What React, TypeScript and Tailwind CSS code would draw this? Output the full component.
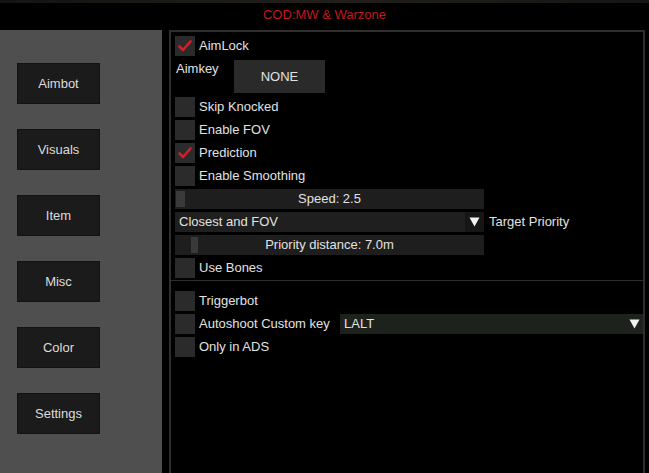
import React from 'react';

const tabs = ['Aimbot', 'Visuals', 'Item', 'Misc', 'Color', 'Settings'];

const Check = ({ checked }: { checked?: boolean }) => (
  <div className="w-[20px] h-[20px] bg-[#2b2b2b] shrink-0 flex items-center justify-center">
    {checked && (
      <svg width="16" height="16" viewBox="0 0 16 16">
        <path d="M2.5 8.5 L6 12 L13.5 3.5" fill="none" stroke="#d21f2a" strokeWidth="2.6" strokeLinecap="round" strokeLinejoin="round" />
      </svg>
    )}
  </div>
);

const Toggle = ({ label, checked }: { label: string; checked?: boolean }) => (
  <div className="flex items-center h-[20px] gap-[4px]">
    <Check checked={checked} />
    <span>{label}</span>
  </div>
);

const Arrow = () => (
  <svg width="11" height="10" viewBox="0 0 11 10">
    <path d="M0.5 0.5 H10.5 L5.5 9.5 Z" fill="#f2f2f2" />
  </svg>
);

const Slider = ({ label, grab, width }: { label: string; grab: number; width: number }) => (
  <div className="relative w-[309px] h-[20px] bg-[#1e1e1e] flex items-center justify-center">
    <div className="absolute top-[2px] bottom-[2px] bg-[#3a3a3a]" style={{ left: grab, width }} />
    <span className="relative">{label}</span>
  </div>
);

export default function App() {
  return (
    <div
      className="w-[649px] h-[473px] bg-black overflow-hidden flex flex-col text-[13px] text-[#e2e2e2]"
      style={{ fontFamily: '"Liberation Sans", Arial, sans-serif' }}
    >
      {/* title strip */}
      <div className="h-[30px] shrink-0 flex flex-col">
        <div className="h-[3px] bg-gradient-to-r from-[#151412] via-[#221f1b] to-[#171614]" />
        <div className="flex-1 flex items-center justify-center pb-[3px] text-[#c4161d]">COD:MW &amp; Warzone</div>
      </div>

      <div className="flex flex-1 min-h-0">
        {/* tab column */}
        <div className="w-[162px] bg-[#4f4f4f] flex flex-col pl-[17px] pt-[33px] gap-[25px]">
          {tabs.map(t => (
            <div key={t} className="w-[83px] h-[41px] bg-[#1b1b1b] border border-[#121212] flex items-center justify-center pt-[1px] text-[#dcdcdc]">
              {t}
            </div>
          ))}
        </div>

        {/* settings panel */}
        <div className="ml-[7px] w-[476px] border-l-2 border-t-2 border-r-2 border-[#2e2e2e] flex flex-col pt-[4px]">
          <div className="pl-[4px] flex flex-col gap-[3px]">
            <Toggle label="AimLock" checked />
            <div className="flex h-[33px] mt-[1px]">
              <span className="w-[59px] pl-[1px] leading-[15px] pt-[1px]">Aimkey</span>
              <div className="w-[91px] h-[33px] bg-[#2a2a2a] flex items-center justify-center">NONE</div>
            </div>
            <div className="flex flex-col gap-[3px] mt-[1px]">
              <Toggle label="Skip Knocked" />
              <Toggle label="Enable FOV" />
              <Toggle label="Prediction" checked />
              <Toggle label="Enable Smoothing" />
              <Slider label="Speed: 2.5" grab={1} width={9} />
              <div className="flex items-center h-[20px]">
                <div className="w-[290px] h-[20px] bg-[#1f1f1f] flex items-center pl-[4px]">Closest and FOV</div>
                <div className="w-[19px] h-[20px] bg-[#161616] flex items-center justify-center">
                  <Arrow />
                </div>
                <span className="ml-[5px]">Target Priority</span>
              </div>
              <Slider label="Priority distance: 7.0m" grab={16} width={7} />
              <Toggle label="Use Bones" />
            </div>
          </div>

          <div className="h-[1px] bg-[#2e2e2e] mt-[2px]" />

          <div className="pl-[4px] flex flex-col gap-[3px] mt-[10px]">
            <Toggle label="Triggerbot" />
            <div className="flex items-center h-[20px]">
              <Check />
              <span className="ml-[4px] w-[141px]">Autoshoot Custom key</span>
              <div className="flex-1 h-[20px] bg-[#1d221d] flex items-center justify-between pl-[4px] pr-[3px]">
                <span>LALT</span>
                <Arrow />
              </div>
            </div>
            <Toggle label="Only in ADS" />
          </div>
        </div>
      </div>
    </div>
  );
}
